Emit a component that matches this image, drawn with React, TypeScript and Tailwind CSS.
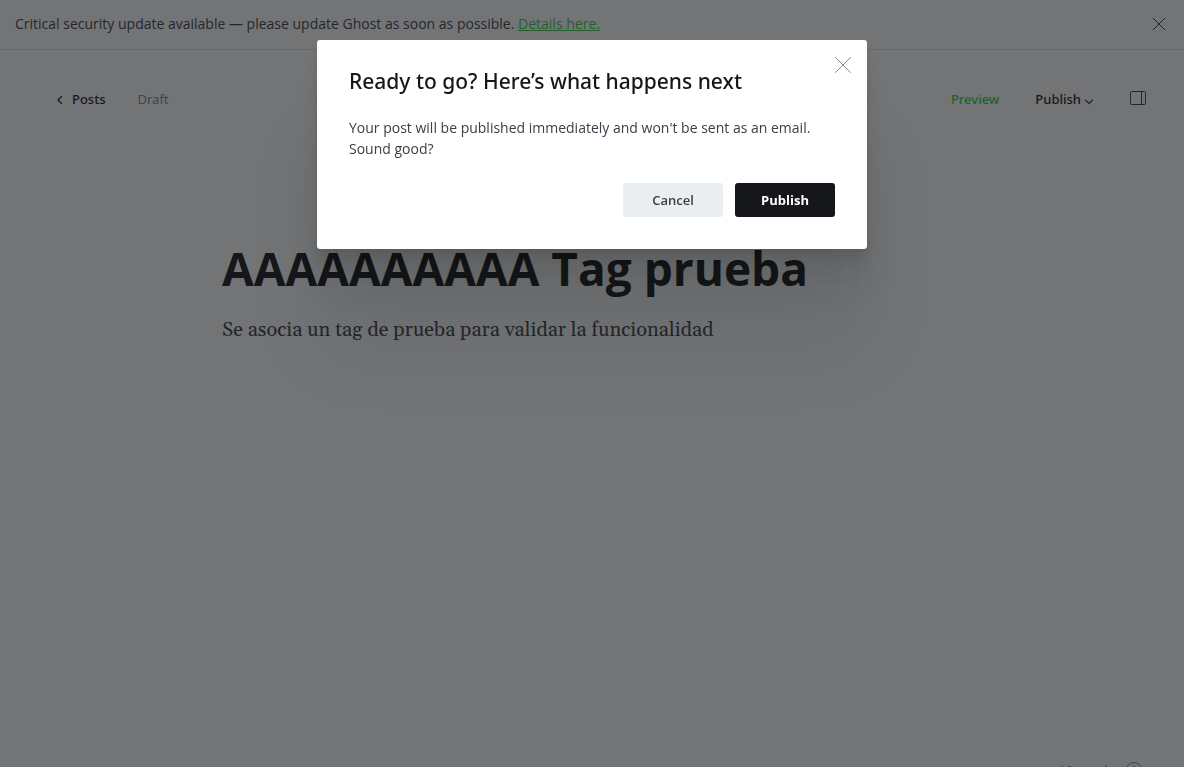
import React from "react";

function CloseIcon({ className }: { className: string }) {
  return (
    <svg viewBox="0 0 16 16" className={className} fill="none" stroke="currentColor" aria-hidden="true">
      <path d="M0.5 0.5l15 15M15.5 0.5l-15 15" strokeLinecap="round" vectorEffect="non-scaling-stroke" />
    </svg>
  );
}

function UpdateBanner() {
  return (
    <div className="flex h-[50px] shrink-0 items-center justify-between border-b border-[#dde1e5] pr-[19px] pb-px pl-[15px] text-sm text-[#394047]">
      <p>
        Critical security update available — please update Ghost as soon as possible.{" "}
        <a href="#details" className="text-[#30cf43] underline">
          Details here.
        </a>
      </p>
      <button type="button" aria-label="Dismiss" className="text-[#394047]">
        <CloseIcon className="size-3" />
      </button>
    </div>
  );
}

function EditorHeader() {
  return (
    <header className="flex h-[98px] shrink-0 items-center justify-between pt-px pr-[38px] pl-14 font-['Noto_Sans','Open_Sans',sans-serif] text-[13px]">
      <div className="flex items-center gap-8">
        <a href="#posts" className="flex items-center gap-2 font-medium text-[#15171a]">
          <svg viewBox="0 0 8 8" className="size-2" fill="none" stroke="currentColor" aria-hidden="true">
            <path d="M5.5 0.5L2 4l3.5 3.5" strokeWidth="1.2" strokeLinecap="round" strokeLinejoin="round" />
          </svg>
          Posts
        </a>
        <span className="text-[#7c8b9a]">Draft</span>
      </div>
      <div className="flex items-center font-medium">
        <button type="button" className="mr-9 text-[#30cf43]">Preview</button>
        <button type="button" className="mr-[37px] flex items-center gap-1 text-[#15171a]">
          Publish
          <svg viewBox="0 0 8 6" className="mt-1 h-[6px] w-2 text-[#394047]" fill="none" stroke="currentColor" aria-hidden="true">
            <path d="M0.5 1L4 4.5L7.5 1" strokeWidth="1.2" strokeLinecap="round" strokeLinejoin="round" />
          </svg>
        </button>
        <button type="button" aria-label="Settings" className="pb-[3px] text-[#394047]">
          <svg viewBox="0 0 16 14" className="h-[14px] w-4" fill="none" stroke="currentColor" aria-hidden="true">
            <rect x="0.5" y="0.5" width="15" height="13" rx="1" />
            <path d="M11.5 0.5v13" />
          </svg>
        </button>
      </div>
    </header>
  );
}

function PublishDialog() {
  return (
    <div className="fixed inset-0 flex items-start justify-center bg-[#15171a]/60 pt-10">
      <div
        role="dialog"
        aria-modal="true"
        aria-labelledby="dialog-title"
        className="relative w-full max-w-[550px] rounded-[3px] bg-white px-8 pt-[25px] pb-8 shadow-[0_3px_2px_rgba(0,0,0,0.02),0_7px_5px_rgba(0,0,0,0.028),0_12px_10px_rgba(0,0,0,0.035),0_22px_18px_rgba(0,0,0,0.042),0_42px_33px_rgba(0,0,0,0.05),0_100px_80px_rgba(0,0,0,0.07)]"
      >
        <button type="button" aria-label="Close" className="absolute top-[17px] right-4 text-[#7c8b9a]">
          <CloseIcon className="size-4" />
        </button>
        <h2 id="dialog-title" className="font-['Noto_Sans','Open_Sans',sans-serif] text-[21px] leading-8 font-medium text-[#15171a]">
          Ready to go? Here’s what happens next
        </h2>
        <p className="mt-5 text-sm leading-[21px] text-[#394047]">
          Your post will be published immediately and won't be sent as an email. Sound good?
        </p>
        <div className="mt-6 flex justify-end gap-3 text-[13px]">
          <button type="button" className="h-[34px] w-[100px] rounded-[3px] bg-[#ebeef0] pt-0.5 font-semibold text-[#394047]">
            Cancel
          </button>
          <button type="button" className="h-[34px] w-[100px] rounded-[3px] bg-[#15171a] pt-0.5 font-bold text-white">
            Publish
          </button>
        </div>
      </div>
    </div>
  );
}

export default function App() {
  return (
    <div className="relative flex h-screen flex-col overflow-hidden bg-white font-['Open_Sans',sans-serif]">
      <UpdateBanner />
      <EditorHeader />
      <main className="mx-auto w-full max-w-[740px] grow pt-[88px]">
        <h1 className="text-[46px] leading-[64px] font-bold text-[#15171a]">AAAAAAAAAA Tag prueba</h1>
        <p className="mt-[14px] font-[Georgia,Gelasio,'Liberation_Serif',serif] text-xl leading-8 text-[#394047]">
          Se asocia un tag de prueba para validar la funcionalidad
        </p>
      </main>
      <footer className="-mb-3 flex shrink-0 items-center justify-end gap-3 pr-[42px] text-[13px] leading-[18px] text-[#7c8b9a]">
        <span>10 words</span>
        <svg viewBox="0 0 16 16" className="size-4" fill="none" stroke="currentColor" aria-hidden="true">
          <circle cx="8" cy="8" r="7.5" />
          <path d="M6 6.2a2 2 0 1 1 2.8 1.9c-.6.3-.8.6-.8 1.3M8 11v1" strokeLinecap="round" />
        </svg>
      </footer>
      <PublishDialog />
    </div>
  );
}
